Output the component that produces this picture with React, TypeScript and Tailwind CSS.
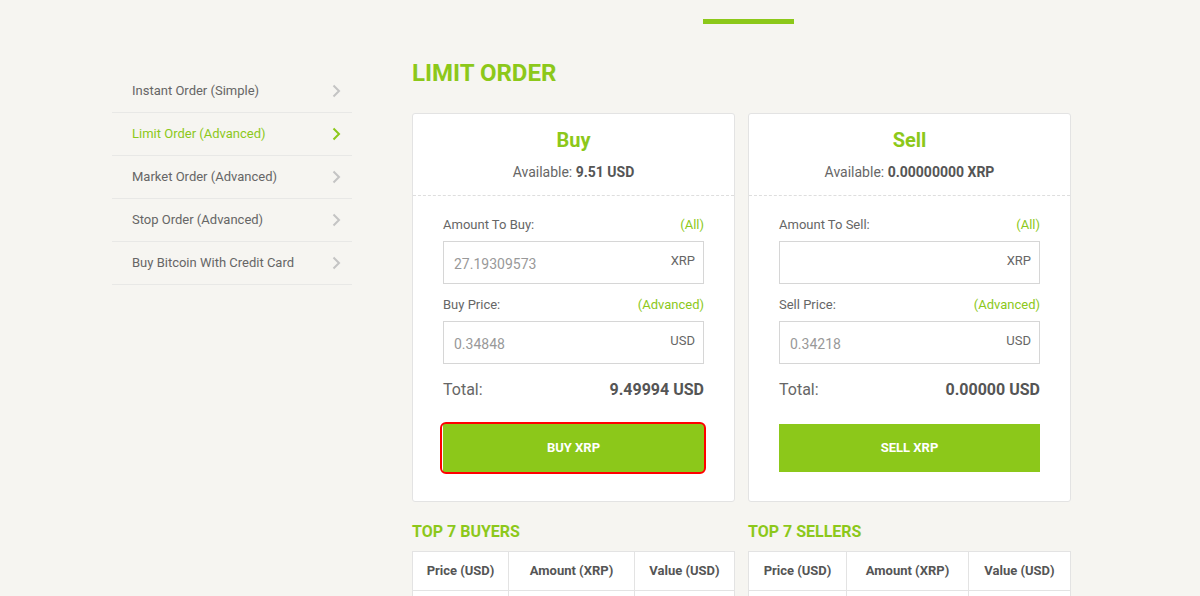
import React from 'react'

const green = 'text-[#8cc81a]'

const menu = [
  'Instant Order (Simple)',
  'Limit Order (Advanced)',
  'Market Order (Advanced)',
  'Stop Order (Advanced)',
  'Buy Bitcoin With Credit Card',
]

const Chevron = ({ active }: { active: boolean }) => (
  <svg width="9" height="14" viewBox="0 0 9 14" fill="none">
    <path d="M1.5 1.5L7 7l-5.5 5.5" stroke={active ? '#8cc81a' : '#c4c4c4'} strokeWidth="2" />
  </svg>
)

interface FieldProps {
  label: string
  link: string
  value: string
  unit: string
}

const Field = ({ label, link, value, unit }: FieldProps) => (
  <div>
    <div className="flex justify-between items-center h-[20px] text-[13px] text-[#666]">
      <span>{label}</span>
      <span className={green}>{link}</span>
    </div>
    <div className="mt-[6px] h-[43px] border border-[#d6d6d6] bg-white flex justify-between pl-[10px] pr-[8px]">
      <span className="pt-[12px] text-[14px] text-[#999]">{value}</span>
      <span className="pt-[9px] text-[13px] text-[#666]">{unit}</span>
    </div>
  </div>
)

interface CardProps {
  title: string
  avail: string
  amountLabel: string
  amount: string
  priceLabel: string
  price: string
  total: string
  button: string
  focused?: boolean
}

const Card = (p: CardProps) => (
  <div className="w-[323px] bg-white border border-[#e3e3e3] rounded-[3px]">
    <div className="h-[82px] border-b border-dashed border-[#dedede] flex flex-col items-center pt-[13px]">
      <div className={`text-[20px] font-bold leading-[26px] ${green}`}>{p.title}</div>
      <div className="mt-[9px] text-[14px] text-[#666]">
        Available: <span className="font-bold text-[#555]">{p.avail}</span>
      </div>
    </div>
    <div className="px-[30px] pt-[19px] pb-[29px]">
      <Field label={p.amountLabel} link="(All)" value={p.amount} unit="XRP" />
      <div className="mt-[11px]">
        <Field label={p.priceLabel} link="(Advanced)" value={p.price} unit="USD" />
      </div>
      <div className="mt-[14px] flex justify-between items-center h-[24px]">
        <span className="text-[16px] text-[#666]">Total:</span>
        <span className="text-[16px] font-bold text-[#555]">{p.total}</span>
      </div>
      <button className="relative mt-[22px] w-full h-[48px] bg-[#8cc81a] text-white text-[13px] font-bold">
        {p.focused && (
          <span className="absolute -inset-[2px] -left-[3px] border-2 border-[#ff0000] rounded-[6px]" />
        )}
        {p.button}
      </button>
    </div>
  </div>
)

const Table = ({ title, cols }: { title: string; cols: number[] }) => (
  <div className="w-[323px]">
    <div className={`text-[16px] font-bold leading-[20px] ${green}`}>{title}</div>
    <div className="mt-[9px] flex bg-white border border-[#e3e3e3] h-[60px]">
      {['Price (USD)', 'Amount (XRP)', 'Value (USD)'].map((h, i) => (
        <div
          key={h}
          style={{ width: cols[i] }}
          className={`h-full flex flex-col ${i > 0 ? 'border-l border-[#e3e3e3]' : ''}`}
        >
          <div className="h-[39px] border-b border-[#e3e3e3] flex items-center justify-center text-[13px] font-bold text-[#555]">
            {h}
          </div>
        </div>
      ))}
    </div>
  </div>
)

const App = () => {
  return (
    <div className="min-h-[596px] bg-[#f6f5f1] overflow-hidden" style={{ fontFamily: 'Roboto, "Liberation Sans", sans-serif' }}>
      <div className="flex pl-[112px]">
        <div className="w-[240px] mt-[70px]">
          {menu.map((m, i) => (
            <div
              key={m}
              className="h-[43px] border-b border-[#e8e8e6] flex items-center justify-between pl-[20px] pr-[11px]"
            >
              <span className={`text-[13px] ${i === 1 ? green : 'text-[#666]'}`}>{m}</span>
              <Chevron active={i === 1} />
            </div>
          ))}
        </div>
        <div className="ml-[60px] w-[659px]">
          <div className="mt-[19px] ml-[291px] w-[91px] h-[5px] bg-[#8cc81a]" />
          <h1 className={`mt-[34px] text-[24px] font-bold leading-[30px] ${green}`}>LIMIT ORDER</h1>
          <div className="mt-[25px] flex gap-[13px]">
            <Card
              title="Buy"
              avail="9.51 USD"
              amountLabel="Amount To Buy:"
              amount="27.19309573"
              priceLabel="Buy Price:"
              price="0.34848"
              total="9.49994 USD"
              button="BUY XRP"
              focused
            />
            <Card
              title="Sell"
              avail="0.00000000 XRP"
              amountLabel="Amount To Sell:"
              amount=""
              priceLabel="Sell Price:"
              price="0.34218"
              total="0.00000 USD"
              button="SELL XRP"
            />
          </div>
          <div className="mt-[20px] flex gap-[13px]">
            <Table title="TOP 7 BUYERS" cols={[95, 126, 100]} />
            <Table title="TOP 7 SELLERS" cols={[97, 122, 102]} />
          </div>
        </div>
      </div>
    </div>
  )
}

export default App
